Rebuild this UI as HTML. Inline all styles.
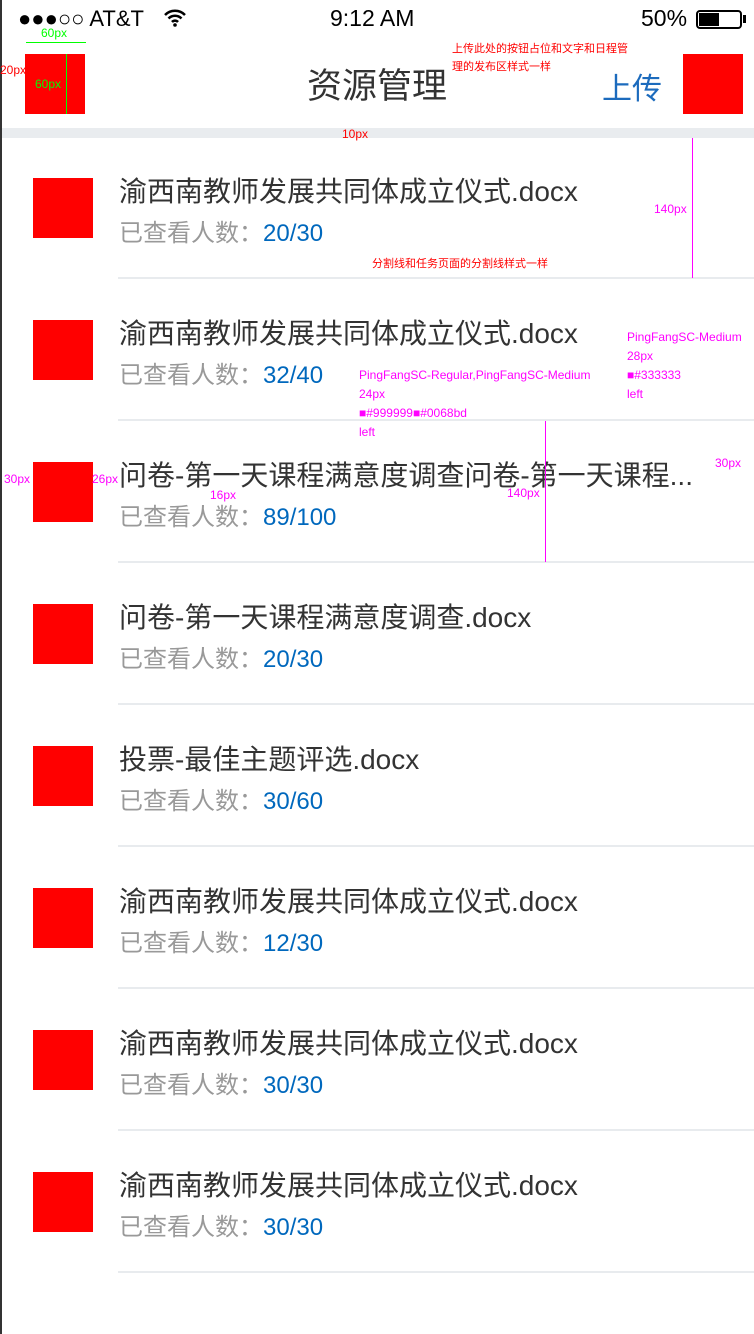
<!DOCTYPE html>
<html><head><meta charset="utf-8"><style>
*{margin:0;padding:0;box-sizing:border-box}
body{width:754px;height:1334px;background:#fff;position:relative;overflow:hidden;font-family:"Liberation Sans","Noto Sans CJK SC",sans-serif}
.a{position:absolute;white-space:nowrap}
.red{position:absolute;background:#f00;width:60px;height:60px}
.sep{position:absolute;left:118px;right:0;height:2px;background:#e8ebee}
.t{position:absolute;left:119px;font-size:28px;line-height:36px;color:#333;white-space:nowrap;margin-top:2px}
.s{position:absolute;left:119px;font-size:24px;line-height:30px;color:#999;white-space:nowrap;margin-top:3px}
.s b{font-weight:normal;color:#0068bd;margin-left:0}
.m{color:#f0f;font-size:12px;position:absolute;white-space:nowrap}
.r{color:#f00;font-size:11px;position:absolute;white-space:nowrap}
.g{color:#0f0;font-size:12px;position:absolute}
</style></head><body>
<div class="a" style="left:0;top:0;width:2px;height:1334px;background:#333"></div>
<div class="a" style="left:18px;top:6px;font-size:22px;color:#000">●●●○○ AT&amp;T</div>
<div class="a" style="left:163px;top:8px;font-size:20px">
<svg width="24" height="20" viewBox="0 0 24 20"><path d="M2 7a14 14 0 0 1 20 0M5.5 10.5a9 9 0 0 1 13 0M9 14a4 4 0 0 1 6 0" stroke="#000" stroke-width="2.5" fill="none"/><circle cx="12" cy="17" r="1.8"/></svg></div>
<div class="a" style="left:330px;top:5px;font-size:23px;color:#000">9:12 AM</div>
<div class="a" style="left:641px;top:5px;font-size:23px;color:#000">50%</div>
<div class="a" style="left:696px;top:10px;width:46px;height:19px;border:2px solid #000;border-radius:4px"><div style="width:20px;height:13px;background:#000;margin:1px"></div></div>
<div class="a" style="left:743px;top:15px;width:3px;height:8px;background:#000"></div>

<div class="red" style="left:25px;top:54px"></div>
<div class="a" style="left:307px;top:65px;font-size:35px;line-height:44px;color:#333">资源管理</div>
<div class="a" style="left:602px;top:64px;font-size:30px;color:#1c6bbd">上传</div>
<div class="red" style="left:683px;top:54px"></div>
<div class="r" style="left:452px;top:40px">上传此处的按钮占位和文字和日程管</div>
<div class="r" style="left:452px;top:58px">理的发布区样式一样</div>
<div class="g" style="left:41px;top:26px">60px</div>
<div class="a" style="left:26px;top:42px;width:60px;height:1px;background:#0f0"></div>
<div class="a" style="left:66px;top:54px;width:1px;height:60px;background:#0f0"></div>
<div class="g" style="left:35px;top:77px">60px</div>
<div class="a" style="left:0;top:63px;color:#f00;font-size:12px">20px</div>

<div class="a" style="left:2px;top:128px;width:752px;height:10px;background:#e9ecef"></div>
<div class="r" style="left:342px;top:127px;font-size:12px">10px</div>

<div class="red" style="left:33px;top:178px"></div>
<div class="t" style="top:172px">渝西南教师发展共同体成立仪式.docx</div>
<div class="s" style="top:216px">已查看人数：<b>20/30</b></div>
<div class="sep" style="top:277px"></div>
<div class="r" style="left:372px;top:255px">分割线和任务页面的分割线样式一样</div>
<div class="m" style="left:654px;top:202px">140px</div>
<div class="a" style="left:692px;top:138px;width:1px;height:140px;background:#f0f"></div>

<div class="red" style="left:33px;top:320px"></div>
<div class="t" style="top:314px">渝西南教师发展共同体成立仪式.docx</div>
<div class="s" style="top:358px">已查看人数：<b>32/40</b></div>
<div class="sep" style="top:419px"></div>
<div class="m" style="left:627px;top:330px">PingFangSC-Medium</div>
<div class="m" style="left:627px;top:349px">28px</div>
<div class="m" style="left:627px;top:368px">■#333333</div>
<div class="m" style="left:627px;top:387px">left</div>
<div class="m" style="left:359px;top:368px">PingFangSC-Regular,PingFangSC-Medium</div>
<div class="m" style="left:359px;top:387px">24px</div>
<div class="m" style="left:359px;top:406px">■#999999■#0068bd</div>
<div class="m" style="left:359px;top:425px">left</div>

<div class="red" style="left:33px;top:462px"></div>
<div class="t" style="top:456px">问卷-第一天课程满意度调查问卷-第一天课程...</div>
<div class="s" style="top:500px">已查看人数：<b>89/100</b></div>
<div class="sep" style="top:561px"></div>
<div class="m" style="left:4px;top:472px">30px</div>
<div class="m" style="left:92px;top:472px">26px</div>
<div class="m" style="left:210px;top:488px">16px</div>
<div class="m" style="left:507px;top:486px">140px</div>
<div class="m" style="left:715px;top:456px">30px</div>
<div class="a" style="left:545px;top:421px;width:1px;height:141px;background:#f0f"></div>

<div class="red" style="left:33px;top:604px"></div>
<div class="t" style="top:598px">问卷-第一天课程满意度调查.docx</div>
<div class="s" style="top:642px">已查看人数：<b>20/30</b></div>
<div class="sep" style="top:703px"></div>

<div class="red" style="left:33px;top:746px"></div>
<div class="t" style="top:740px">投票-最佳主题评选.docx</div>
<div class="s" style="top:784px">已查看人数：<b>30/60</b></div>
<div class="sep" style="top:845px"></div>

<div class="red" style="left:33px;top:888px"></div>
<div class="t" style="top:882px">渝西南教师发展共同体成立仪式.docx</div>
<div class="s" style="top:926px">已查看人数：<b>12/30</b></div>
<div class="sep" style="top:987px"></div>

<div class="red" style="left:33px;top:1030px"></div>
<div class="t" style="top:1024px">渝西南教师发展共同体成立仪式.docx</div>
<div class="s" style="top:1068px">已查看人数：<b>30/30</b></div>
<div class="sep" style="top:1129px"></div>

<div class="red" style="left:33px;top:1172px"></div>
<div class="t" style="top:1166px">渝西南教师发展共同体成立仪式.docx</div>
<div class="s" style="top:1210px">已查看人数：<b>30/30</b></div>
<div class="sep" style="top:1271px"></div>
</body></html>
